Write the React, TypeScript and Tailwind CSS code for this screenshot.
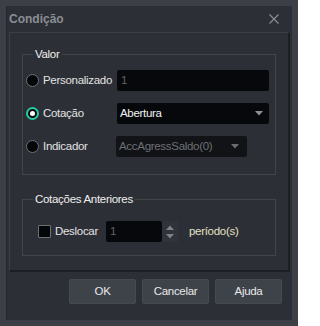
import React from "react";

const Radio = ({ checked }: { checked?: boolean }) =>
  checked ? (
    <span className="shrink-0 w-[13px] h-[13px] rounded-full border-[2px] border-[#27c9a6] bg-[#0b0c0f] flex items-center justify-center">
      <span className="w-[5px] h-[5px] rounded-full bg-white" />
    </span>
  ) : (
    <span className="shrink-0 w-[13px] h-[13px] rounded-full border border-[#6e7177] bg-[#050608]" />
  );

const Caret = ({ color = "#8c9096" }: { color?: string }) => (
  <svg width="8" height="5" viewBox="0 0 8 5" className="shrink-0">
    <path d="M0 0h8L4 4.5z" fill={color} />
  </svg>
);

export default function App() {
  return (
    <div
      className="w-[298px] h-[326px] overflow-hidden bg-[#3c3f45] p-[6px] text-[11.5px] tracking-[-0.3px] text-[#e2e2e2]"
      style={{ fontFamily: '"Liberation Sans", Arial, sans-serif' }}
    >
      <div className="w-full h-full bg-[#2c2f36] flex flex-col border-l border-[#26282e]">
        <div className="h-[26px] flex items-center justify-between pl-[2px] pr-[13px]">
          <span className="font-bold text-[12px] tracking-normal text-[#8b8e94]">Condição</span>
          <svg width="10" height="10" viewBox="0 0 10 10">
            <path d="M0.5 0.5L9.5 9.5M9.5 0.5L0.5 9.5" stroke="#8a8d93" strokeWidth="1.2" />
          </svg>
        </div>
        <div className="mx-[2px] h-[240px] border-t border-l border-[#3b3e45] border-r-2 border-b-2 border-r-[#1d1f24] border-b-[#1d1f24] px-[12px] pt-[21px] flex flex-col">
          <div className="relative border border-[#42454c] h-[121px] pl-[3px] pr-[6px] pt-[15px] flex flex-col gap-[12px]">
            <span className="absolute left-[10px] top-[-8px] px-[2px] bg-[#2c2f36] text-[#f0f0f0] leading-[14px]">
              Valor
            </span>
            <div className="flex items-center h-[21px]">
              <div className="w-[91px] shrink-0 flex items-center gap-[4px]">
                <Radio />
                <span>Personalizado</span>
              </div>
              <div className="flex-1 h-[21px] bg-[#07080b] rounded-[2px] flex items-center px-[4px] text-[#5f6268]">
                1
              </div>
            </div>
            <div className="flex items-center h-[21px]">
              <div className="w-[91px] shrink-0 flex items-center gap-[4px]">
                <Radio checked />
                <span>Cotação</span>
              </div>
              <div className="flex-1 h-[21px] bg-[#07080b] rounded-[2px] flex items-center justify-between pl-[3px] pr-[6px] text-[#f4f4f4]">
                <span>Abertura</span>
                <Caret />
              </div>
            </div>
            <div className="flex items-center h-[21px]">
              <div className="w-[90px] shrink-0 flex items-center gap-[4px]">
                <Radio />
                <span>Indicador</span>
              </div>
              <div className="w-[131px] h-[21px] bg-[#111317] rounded-[2px] flex items-center justify-between pl-[3px] pr-[8px] text-[#6d7076]">
                <span>AccAgressSaldo(0)</span>
                <Caret color="#6a6d73" />
              </div>
            </div>
          </div>
          <div className="relative mt-[24px] border border-[#42454c] h-[57px] pl-[15px] pt-[21px] flex">
            <span className="absolute left-[10px] top-[-8px] px-[2px] bg-[#2c2f36] text-[#f0f0f0] leading-[14px]">
              Cotações Anteriores
            </span>
            <div className="flex items-center h-[21px]">
              <span className="shrink-0 w-[13px] h-[13px] border border-[#6e7177] bg-[#050608] rounded-[1px]" />
              <span className="ml-[4px] w-[51px]">Deslocar</span>
              <div className="w-[56px] h-[21px] bg-[#07080b] rounded-[2px] flex items-center px-[4px] text-[#5f6268]">
                1
              </div>
              <div className="w-[16px] h-[21px] bg-[#30333a] flex flex-col items-center justify-center gap-[4px]">
                <svg width="8" height="5" viewBox="0 0 8 5">
                  <path d="M0 5h8L4 0.5z" fill="#7d8187" />
                </svg>
                <svg width="8" height="5" viewBox="0 0 8 5">
                  <path d="M0 0h8L4 4.5z" fill="#7d8187" />
                </svg>
              </div>
              <span className="ml-[11px] text-[#e6e0c4]">período(s)</span>
            </div>
          </div>
        </div>
        <div className="flex justify-end gap-[6px] pr-[10px] pt-[7px]">
          {["OK", "Cancelar", "Ajuda"].map((b) => (
            <button
              key={b}
              className="w-[67px] h-[25px] bg-[#3e434a] border border-[#454a51] rounded-[2px] text-[#e8e8e8] text-[11.5px]"
            >
              {b}
            </button>
          ))}
        </div>
      </div>
    </div>
  );
}
